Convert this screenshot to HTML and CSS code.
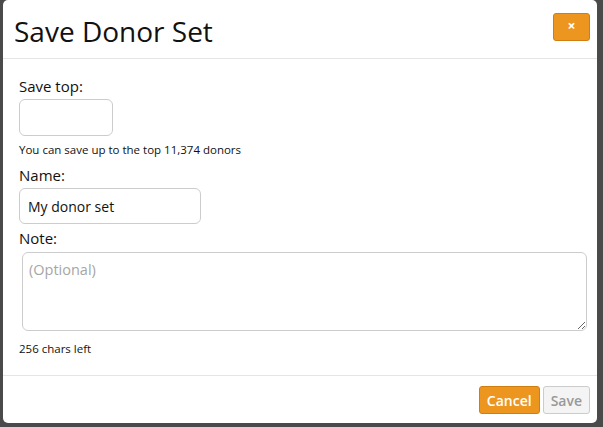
FILE: index.html
```html
<!DOCTYPE html>
<html>
<head>
<meta charset="utf-8">
<link rel="stylesheet" href="styles.css">
</head>
<body>
<div class="backdrop">
  <div class="modal">
    <div class="modal-header">
      <h1 class="title">Save Donor Set</h1>
      <button class="close">×</button>
    </div>
    <div class="modal-body">
      <label class="label">Save top:</label>
      <input class="input input-small" type="text">
      <div class="help">You can save up to the top 11,374 donors</div>
      <label class="label">Name:</label>
      <input class="input input-name" type="text" value="My donor set">
      <label class="label label-note">Note:</label>
      <textarea class="textarea" placeholder="(Optional)"></textarea>
      <div class="help chars">256 chars left</div>
    </div>
    <div class="modal-footer">
      <button class="btn btn-cancel">Cancel</button>
      <button class="btn btn-save">Save</button>
    </div>
  </div>
</div>
</body>
</html>
```

FILE: styles.css
```css
html, body {
  margin: 0;
  padding: 0;
  height: 100%;
}
body {
  background: #4a4a4a;
  font-family: "Open Sans", "Noto Sans", sans-serif;
  color: #111;
}
.backdrop {
  padding: 0 6px 0 3px;
  height: 427px;
  box-sizing: border-box;
}
.modal {
  background: #fff;
  border-radius: 5px;
  height: 423px;
  display: flex;
  flex-direction: column;
  overflow: hidden;
}
.modal-header {
  flex-shrink: 0;
  display: flex;
  justify-content: space-between;
  align-items: flex-start;
  border-bottom: 1px solid #e5e5e5;
  height: 59px;
  box-sizing: border-box;
  padding: 13px 7px 0 11px;
}
.title {
  margin: 0;
  font-weight: 400;
  font-size: 28px;
  line-height: 36px;
  color: #111;
}
.close {
  width: 37px;
  height: 28px;
  background: #ec961f;
  border: 1px solid #d07e12;
  border-radius: 3px;
  color: #fff;
  font-family: "Open Sans", sans-serif;
  font-weight: 700;
  font-size: 14px;
  line-height: 1;
  padding: 0 0 3px;
  margin: 0;
}
.modal-body {
  flex: 1;
  min-height: 0;
  display: flex;
  flex-direction: column;
  align-items: flex-start;
  padding: 17px 9px 0 16px;
}
.label {
  font-size: 15px;
  line-height: 20px;
  margin-bottom: 3px;
}
.label-note {
  margin-bottom: 4px;
}
.input {
  box-sizing: border-box;
  height: 37px;
  border: 1px solid #ccc;
  border-radius: 6px;
  font-family: "Open Sans", sans-serif;
  font-size: 14px;
  color: #111;
  padding: 0 8px;
  margin: 0;
}
.input-small {
  width: 94px;
}
.input-name {
  width: 182px;
  height: 36px;
  margin-bottom: 4px;
}
.help {
  font-size: 11.5px;
  line-height: 16px;
  margin: 6px 0 7px;
}
.textarea {
  box-sizing: border-box;
  width: 565px;
  height: 79px;
  margin: 0 0 0 3px;
  border: 1px solid #ccc;
  border-radius: 6px;
  font-family: "Open Sans", sans-serif;
  font-size: 14.5px;
  padding: 7px 6px;
  resize: vertical;
}
.textarea::placeholder {
  color: #a6a6a6;
}
.chars {
  margin-top: 10px;
}
.modal-footer {
  flex-shrink: 0;
  border-top: 1px solid #e5e5e5;
  height: 48px;
  box-sizing: border-box;
  display: flex;
  justify-content: flex-end;
  align-items: flex-start;
  gap: 3px;
  padding: 10px 7px 0 0;
}
.btn {
  height: 28px;
  font-family: "Open Sans", sans-serif;
  font-size: 14px;
  border-radius: 3px;
  padding: 0 7px;
  margin: 0;
}
.btn-cancel {
  background: #ec961f;
  border: 1px solid #d07e12;
  color: #fff;
  font-weight: 600;
}
.btn-save {
  background: #f4f4f4;
  border: 1px solid #ccc;
  color: #999;
  font-weight: 600;
}
```
